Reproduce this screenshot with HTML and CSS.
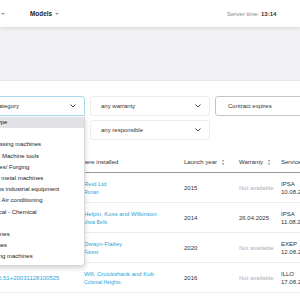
FILE: index.html
```html
<!DOCTYPE html>
<html lang="en">
<head>
    <meta charset="UTF-8">
    <meta name="viewport" content="width=device-width, initial-scale=1.0">
    <title>Devices</title>
    <link rel="stylesheet" href="styles.css">
</head>
<body>
    <header class="topbar">
        <span class="caret caret-left"></span>
        <span class="menu-item">Models</span>
        <span class="caret"></span>
        <div class="server-time">Server time: <b>13:14</b></div>
    </header>
    <div class="band"></div>

    <main class="page">
        <div class="filters">
            <div class="select focused">
                <span>Any category</span>
                <svg class="chevron" width="6" height="4" viewBox="0 0 6 4"><polyline points="0.5,0.5 3,3 5.5,0.5" fill="none" stroke="#333" stroke-width="0.9"/></svg>
                <ul class="dropdown">
                    <li class="active">Any type</li>
                    <li>&nbsp;</li>
                    <li>Processing machines</li>
                    <li>Mach. Machine tools</li>
                    <li>Presses/ Forging</li>
                    <li>Sheet metal machines</li>
                    <li>Various industrial equipment</li>
                    <li>HVAC Air conditioning</li>
                    <li>Physical - Chemical</li>
                    <li>Paper</li>
                    <li>Machines</li>
                    <li>Turbines</li>
                    <li>Packing machines</li>
                </ul>
            </div>
            <div class="select">
                <span>any warranty</span>
                <svg class="chevron" width="6" height="4" viewBox="0 0 6 4"><polyline points="0.5,0.5 3,3 5.5,0.5" fill="none" stroke="#333" stroke-width="0.9"/></svg>
            </div>
            <div class="input">Contract expires</div>
            <div class="select second-row">
                <span>any responsible</span>
                <svg class="chevron" width="6" height="4" viewBox="0 0 6 4"><polyline points="0.5,0.5 3,3 5.5,0.5" fill="none" stroke="#333" stroke-width="0.9"/></svg>
            </div>
        </div>

        <table class="devices">
            <thead>
                <tr>
                    <th class="col-serial">Serial number</th>
                    <th class="col-place">Where installed</th>
                    <th class="col-year">Launch year <span class="sort"></span></th>
                    <th class="col-warranty">Warranty <span class="sort"></span></th>
                    <th class="col-service">Service</th>
                </tr>
            </thead>
            <tbody>
                <tr>
                    <td class="link">00.14+20010312091530</td>
                    <td class="place"><a class="link">Reid Ltd</a><span class="city">Ronan</span></td>
                    <td>2015</td>
                    <td class="muted">Not available</td>
                    <td>IPSA<br>10.08.2025</td>
                </tr>
                <tr>
                    <td class="link">00.22+20020417113045</td>
                    <td class="place"><a class="link">Helpin, Koss and Wilkinson</a><span class="city">Vista Bells</span></td>
                    <td>2014</td>
                    <td>26.04.2025</td>
                    <td>IPSA<br>11.08.2025</td>
                </tr>
                <tr>
                    <td class="link">00.37+20030609140010</td>
                    <td class="place"><a class="link">Dwayn-Flatley</a><span class="city">Forest</span></td>
                    <td>2020</td>
                    <td class="muted">Not available</td>
                    <td>EXEP<br>12.08.2025</td>
                </tr>
                <tr>
                    <td class="link">SN-000.51+20031128100525</td>
                    <td class="place"><a class="link">Will, Cruickshank and Kub</a><span class="city">Colonial Heights</span></td>
                    <td>2016</td>
                    <td class="muted">Not available</td>
                    <td>ILLO<br>17.08.2025</td>
                </tr>
            </tbody>
        </table>
    </main>
</body>
</html>
```

FILE: styles.css
```css
body {
    margin: 0;
    font-family: "Liberation Sans", Arial, sans-serif;
    font-size: 6px;
    color: #333;
    background: #fff;
    overflow: hidden;
}
.topbar {
    position: relative;
    z-index: 2;
    height: 27px;
    display: flex;
    align-items: center;
    background: #fff;
    box-shadow: 0 1px 4px rgba(0, 0, 0, 0.12);
}
.caret {
    width: 0;
    height: 0;
    border-left: 2px solid transparent;
    border-right: 2px solid transparent;
    border-top: 2px solid #999;
    margin-left: 3px;
}
.caret-left {
    margin-left: 1px;
    margin-right: 25px;
}
.menu-item {
    font-weight: bold;
    font-size: 6.4px;
    color: #222;
}
.server-time {
    margin-left: auto;
    width: 73px;
    color: #888;
}
.server-time b {
    color: #333;
}
.band {
    height: 53px;
    background: #f2f2f5;
    border-bottom: 1px solid #e8e8ec;
}
.page {
    margin-left: -27px;
    width: 400px;
}
.filters {
    margin-top: 15px;
    display: grid;
    grid-template-columns: 112px 120px 120px;
    grid-auto-rows: 20px;
    gap: 4px 5px;
}
.select, .input {
    position: relative;
    display: flex;
    align-items: center;
    justify-content: space-between;
    padding: 0 8px 0 10px;
    border: 1px solid #ececee;
    border-radius: 3px;
    box-sizing: border-box;
}
.select.focused {
    border-color: #a9d9ea;
    border-radius: 3px 3px 0 0;
}
.input {
    padding-left: 12px;
    border-color: #c4c4c8;
}
.second-row {
    grid-column: 2;
}
.dropdown {
    position: absolute;
    z-index: 3;
    top: 20px;
    left: -1px;
    right: -1px;
    margin: 0;
    padding: 0 0 3px;
    list-style: none;
    background: #fff;
    border: 1px solid #d8d8dc;
    border-top: none;
    border-radius: 0 0 4px 4px;
    box-shadow: 0 2px 5px rgba(0, 0, 0, 0.18);
}
.dropdown li {
    padding-left: 10px;
    height: 11.2px;
    line-height: 11.2px;
    white-space: nowrap;
    color: #222;
}
.dropdown li.active {
    background: #e2e2e6;
}
.devices {
    margin-top: 12px;
    border-collapse: collapse;
    table-layout: fixed;
    width: 400px;
}
.devices th {
    height: 20px;
    text-align: left;
    font-weight: normal;
    color: #333;
    border-bottom: 1px solid #9a9a9e;
    padding: 0 8px;
    white-space: nowrap;
}
.devices td {
    height: 29px;
    padding: 0 8px;
    border-bottom: 1px solid #ececee;
    vertical-align: middle;
    white-space: nowrap;
    line-height: 8px;
}
.col-serial { width: 86px; }
.devices th.col-place {
    width: 91px;
    padding-left: 2px;
}
.devices td.place {
    padding-left: 9px;
}
.col-year { width: 39px; }
.col-warranty { width: 26px; }
.sort {
    display: inline-block;
    width: 2px;
    height: 5px;
    margin-left: 3px;
    vertical-align: middle;
    background:
        linear-gradient(#aaa, #aaa) 0 0 / 2px 1.5px no-repeat,
        linear-gradient(#aaa, #aaa) 0 3.5px / 2px 1.5px no-repeat;
}
.link {
    color: #2aa6d8;
    text-decoration: none;
}
.city {
    display: block;
    font-size: 5px;
    color: #2aa6d8;
}
.muted {
    color: #b0b0b4;
}
```
